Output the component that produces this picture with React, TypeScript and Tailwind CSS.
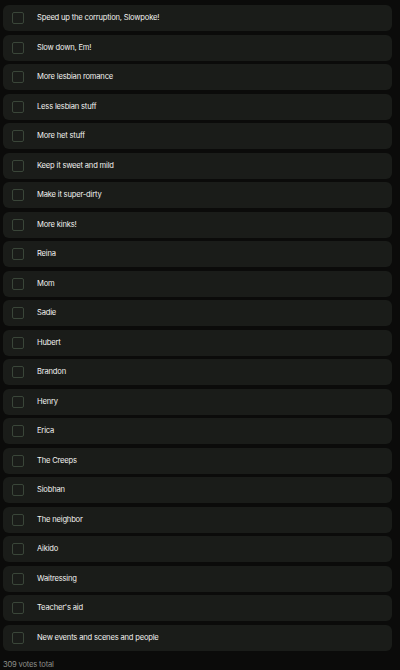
const options = [
  "Speed up the corruption, Slowpoke!",
  "Slow down, Em!",
  "More lesbian romance",
  "Less lesbian stuff",
  "More het stuff",
  "Keep it sweet and mild",
  "Make it super-dirty",
  "More kinks!",
  "Reina",
  "Mom",
  "Sadie",
  "Hubert",
  "Brandon",
  "Henry",
  "Erica",
  "The Creeps",
  "Siobhan",
  "The neighbor",
  "Aikido",
  "Waitressing",
  "Teacher's aid",
  "New events and scenes and people",
];

const PollOption = ({ label }: { label: string }) => {
  return (
    <label className="flex h-[26px] items-center rounded-[6px] bg-[#1a1c19] pl-[9px]">
      <span className="h-[12px] w-[12px] shrink-0 rounded-[2px] border border-[#3a4639]" />
      <span className="ml-[13px] text-[7.6px] leading-[10px] tracking-[-0.025em] text-[#f2f2f0]">{label}</span>
    </label>
  );
};

export default function App() {
  return (
    <div className="min-h-[670px] w-[400px] bg-[#0b0b0a] px-[3px] pt-[5px] font-['Inter',sans-serif]">
      <div className="flex w-[389px] flex-col gap-[3.5px]">
        {options.map((o) => (
          <PollOption key={o} label={o} />
        ))}
      </div>
      <p className="mt-[8px] text-[7.6px] tracking-[-0.025em] text-[#8d8f8b]">309 votes total</p>
    </div>
  );
}
